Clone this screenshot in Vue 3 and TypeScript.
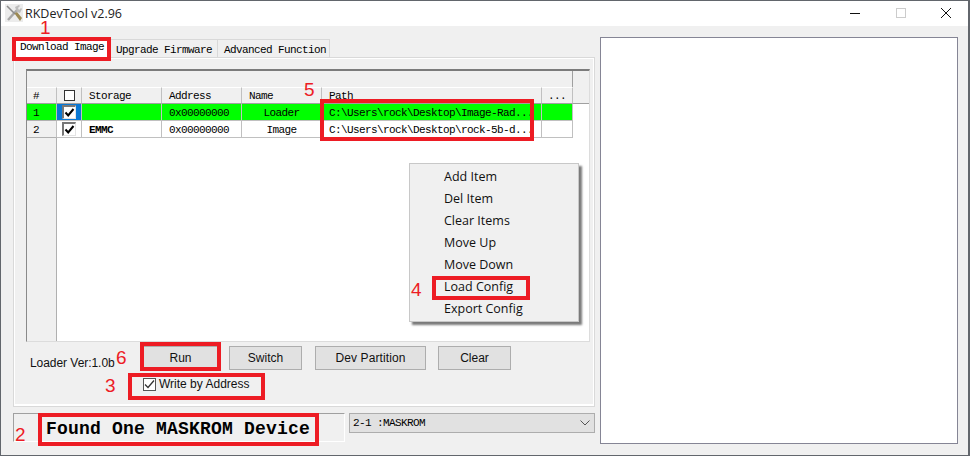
<script setup lang="ts">
const columns = [
  { label: '#', cls: 'c-num' },
  { label: '', cls: 'c-chk', box: true },
  { label: 'Storage', cls: 'c-sto' },
  { label: 'Address', cls: 'c-adr' },
  { label: 'Name', cls: 'c-nam' },
  { label: 'Path', cls: 'c-pat' },
  { label: '...', cls: 'c-dot' },
]
const rows = [
  { n: '1', storage: '', address: '0x00000000', name: 'Loader', path: 'C:\\Users\\rock\\Desktop\\Image-Rad...', sel: true },
  { n: '2', storage: 'EMMC', address: '0x00000000', name: 'Image', path: 'C:\\Users\\rock\\Desktop\\rock-5b-d...', sel: false },
]
const menu = ['Add Item', 'Del Item', 'Clear Items', 'Move Up', 'Move Down', 'Load Config', 'Export Config']
const marks = [
  { t: '1', x: 40, y: 21 },
  { t: '2', x: 15, y: 428 },
  { t: '3', x: 105, y: 379 },
  { t: '4', x: 411, y: 283 },
  { t: '5', x: 304, y: 83 },
  { t: '6', x: 116, y: 351 },
]
const boxes = [
  { x: 12, y: 37, w: 99, h: 24 },
  { x: 38, y: 413, w: 281, h: 33 },
  { x: 128, y: 373, w: 137, h: 27 },
  { x: 432, y: 276, w: 98, h: 24 },
  { x: 320, y: 99, w: 214, h: 42 },
  { x: 140, y: 342, w: 81, h: 29 },
]
</script>

<template>
  <div class="desk">
    <div class="win">
      <header class="title">
        <svg class="logo" width="20" height="20" viewBox="0 0 20 20">
          <rect x="1" y="1" width="18" height="18" fill="#ececec" />
          <path d="M4 17 L13 7" stroke="#a8a8a8" stroke-width="2.4" />
          <path d="M11 4 L15 2 L16 3 L14 5 L15 7 L17 5 L18 6 L16 10 L13 9 Z" fill="#bdbdbd" />
          <path d="M3 3 L11 11" stroke="#8c8c8c" stroke-width="1.6" />
          <path d="M10.5 10.5 L13 9 L18 15 L16 18 Z" fill="#9c8a55" />
        </svg>
        <span class="title-text">RKDevTool v2.96</span>
        <div class="caps">
          <svg width="12" height="12" viewBox="0 0 12 12"><path d="M1 6.5H11" stroke="#111" stroke-width="1" /></svg>
          <svg width="12" height="12" viewBox="0 0 12 12"><rect x="1.5" y="1.5" width="9" height="9" fill="none" stroke="#ccc" /></svg>
          <svg width="12" height="12" viewBox="0 0 12 12"><path d="M1 1L11 11M11 1L1 11" stroke="#111" stroke-width="1" /></svg>
        </div>
      </header>

      <div class="client">
        <div class="left">
          <nav class="tabs">
            <span class="tab active">Download Image</span>
            <span class="tab t2">Upgrade Firmware</span>
            <span class="tab t3">Advanced Function</span>
          </nav>
          <section class="panel">
            <div class="grid">
              <div class="band"><i class="band-line"></i></div>
              <div class="row head">
                <div v-for="c in columns" :key="c.cls" class="cell" :class="c.cls">
                  <span v-if="c.box" class="hbox"></span>
                  <template v-else>{{ c.label }}</template>
                </div>
                <div class="head-rest"></div>
              </div>
              <div v-for="r in rows" :key="r.n" class="row body" :class="{ sel: r.sel }">
                <div class="cell c-num">{{ r.n }}</div>
                <div class="cell c-chk">
                  <span class="check">
                    <svg width="11" height="11" viewBox="0 0 11 11"><path d="M1.5 5.5L4.2 8.5L9.5 2" fill="none" stroke="#000" stroke-width="2" /></svg>
                  </span>
                </div>
                <div class="cell c-sto strong">{{ r.storage }}</div>
                <div class="cell c-adr">{{ r.address }}</div>
                <div class="cell c-nam center">{{ r.name }}</div>
                <div class="cell c-pat">{{ r.path }}</div>
                <div class="cell c-dot"></div>
              </div>
              <div class="num-rest"></div>
            </div>

            <div class="actions">
              <span class="ver">Loader Ver:1.0b</span>
              <button class="btn b-run">Run</button>
              <button class="btn b-switch">Switch</button>
              <button class="btn b-dev">Dev Partition</button>
              <button class="btn b-clear">Clear</button>
            </div>
            <label class="wba">
              <span class="wba-box">
                <svg width="11" height="11" viewBox="0 0 11 11"><path d="M1 5.5L4 8.5L10 1.5" fill="none" stroke="#333" stroke-width="1.3" /></svg>
              </span>
              Write by Address
            </label>
          </section>

          <footer class="foot">
            <div class="status">Found One MASKROM Device</div>
            <div class="combo">
              <span>2-1 :MASKROM</span>
              <svg width="10" height="6" viewBox="0 0 10 6"><path d="M0.5 0.5L5 5L9.5 0.5" fill="none" stroke="#555" stroke-width="1" /></svg>
            </div>
          </footer>
        </div>
        <div class="log"></div>
      </div>
    </div>

    <ul class="menu">
      <li v-for="m in menu" :key="m">{{ m }}</li>
    </ul>

    <div
      v-for="(b, i) in boxes"
      :key="i"
      class="red-box"
      :style="{ left: b.x + 'px', top: b.y + 'px', width: b.w + 'px', height: b.h + 'px' }"
    ></div>
    <span
      v-for="m in marks"
      :key="m.t"
      class="mark"
      :style="{ left: m.x + 'px', top: m.y + 'px' }"
    >{{ m.t }}</span>
  </div>
</template>

<style>
html, body { margin: 0; background: #3b4a58; overflow: hidden; }
</style>

<style scoped>
.desk {
  position: relative;
  width: 970px;
  height: 456px;
  padding: 1px 1px 0 1px;
  box-sizing: border-box;
  overflow: hidden;
  background: #62666c;
}
.win {
  width: 967px;
  height: 454px;
  background: #f0f0f0;
  display: flex;
  flex-direction: column;
  box-sizing: border-box;
}
.title {
  height: 25px;
  flex: none;
  background: #fff;
  display: flex;
  align-items: center;
  padding: 0 0 1px 3px;
  box-sizing: border-box;
}
.logo { flex: none; }
.title-text {
  margin-left: 1px;
  font: 12.5px "Open Sans", "Noto Sans", sans-serif;
  color: #222;
}
.caps {
  margin-left: auto;
  display: flex;
  gap: 33.5px;
  padding: 0 16px 1px 0;
}
.client {
  flex: 1;
  display: flex;
  padding: 11px 10px 11px 12px;
  gap: 5px;
  min-height: 0;
}
.left {
  width: 582px;
  flex: none;
  display: flex;
  flex-direction: column;
}
.tabs {
  display: flex;
  height: 20px;
  font: 11px "Liberation Mono", monospace;
  letter-spacing: -0.6px;
  color: #000;
  padding-left: 3px;
  flex: none;
  position: relative;
}
.tab {
  padding: 4px 5px 0 7px;
  background: #f0f0f0;
  border: 1px solid #d9d9d9;
  border-left: none;
  border-bottom: none;
  height: 18px;
  margin-top: 2px;
  box-sizing: border-box;
  white-space: nowrap;
}
.tab.t3 { padding: 4px 3px 0 6px; }
.tab.active {
  background: #fff;
  margin-top: 0;
  height: 21px;
  padding: 4px 5px 0 4px;
  border: none;
  position: relative;
}
.panel {
  width: 582px;
  height: 350px;
  border: 1px solid #d9d9d9;
  box-sizing: border-box;
  padding: 11px 0 0 12px;
  background: #f0f0f0;
  box-shadow: inset -1px -2px 0 #fff, inset 1px 1px 0 #fff;
}
.grid {
  width: 564px;
  height: 273px;
  background: #fff;
  border-top: 2px solid #7b7b7b;
  border-left: 1px solid #8a8a8a;
  border-right: 1px solid #dcdcdc;
  border-bottom: 1px solid #dcdcdc;
  box-sizing: border-box;
  position: relative;
  font: 11px "Liberation Mono", monospace;
  letter-spacing: -0.6px;
  color: #000;
}
.band {
  height: 16px;
  background: #f0f0f0;
}
.band-line {
  display: block;
  box-sizing: border-box;
  width: 546px;
  height: 100%;
  border-right: 1px solid #a0a0a0;
}
.row {
  display: flex;
  height: 17px;
}
.cell {
  box-sizing: border-box;
  padding-left: 7px;
  line-height: 17px;
  padding-top: 1px;
  border-right: 1px solid #c0c0c0;
  border-bottom: 1px solid #c0c0c0;
  white-space: pre;
  flex: none;
}
.head { background: #f0f0f0; }
.head .cell {
  line-height: 17px;
  padding-top: 0;
  border-top: 1px solid #fff;
  border-bottom: 1px solid #a0a0a0;
}
.head-rest {
  flex: 1;
  border-bottom: 1px solid #a0a0a0;
}
.grid .c-num { width: 30px; padding-left: 6px; }
.grid .c-chk { width: 25px; padding: 0; display: flex; align-items: center; justify-content: center; }
.c-sto { width: 80px; }
.c-adr { width: 80px; }
.c-nam { width: 80px; }
.c-pat { width: 220px; }
.grid .c-dot { width: 31px; text-align: center; padding-left: 0; }
.grid .center { text-align: center; padding-left: 0; }
.strong { font-weight: 700; }
.body .c-num { background: #f0f0f0; border-bottom-color: #b0b0b0; }
.sel .cell { background: #00ff00; }
.sel .c-chk { background: #0a78d4; }
.body.sel .c-num { background: #00ff00; }
.hbox {
  width: 9px;
  height: 9px;
  border: 1px solid #333;
  background: #fff;
}
.check {
  width: 14px;
  height: 14px;
  box-sizing: border-box;
  background: #fff;
  border: 1px solid #e4e4e4;
  border-top: 2px solid #777;
  border-left: 2px solid #777;
  display: flex;
  align-items: center;
  justify-content: center;
}
.num-rest {
  position: absolute;
  left: 0;
  top: 67px;
  width: 29px;
  bottom: 0;
  box-sizing: content-box;
  background: #f0f0f0;
  border-right: 1px solid #b0b0b0;
}
.actions {
  display: flex;
  align-items: flex-start;
  margin-top: 4px;
  height: 25px;
  font: 12px "Liberation Sans", sans-serif;
  color: #111;
}
.ver {
  width: 115px;
  margin-left: 4px;
  padding-top: 10px;
  letter-spacing: -0.05px;
  white-space: nowrap;
  flex: none;
}
.btn {
  height: 24px;
  box-sizing: border-box;
  background: #e1e1e1;
  border: 1px solid #adadad;
  font: 12px "Liberation Sans", sans-serif;
  color: #111;
  padding: 0;
  flex: none;
}
.b-run { width: 77px; margin-left: -3px; }
.b-switch { width: 73px; margin-left: 10px; }
.b-dev { width: 111px; margin-left: 13px; letter-spacing: 0.1px; }
.b-clear { width: 73px; margin-left: 12px; }
.wba {
  display: flex;
  align-items: center;
  margin: 5px 0 0 117px;
  height: 16px;
  font: 12px "Liberation Sans", sans-serif;
  color: #111;
  white-space: nowrap;
}
.wba-box {
  width: 13px;
  height: 13px;
  box-sizing: border-box;
  border: 1px solid #555;
  background: #fff;
  margin-right: 3px;
  display: flex;
  align-items: center;
  justify-content: center;
}
.foot {
  display: flex;
  margin-top: 6px;
  gap: 4px;
  flex: none;
}
.status {
  width: 332px;
  height: 29px;
  box-sizing: border-box;
  border-top: 1px solid #a0a0a0;
  border-left: 1px solid #a0a0a0;
  border-right: 1px solid #fff;
  border-bottom: 1px solid #fff;
  font: 700 18px "Liberation Mono", monospace;
  letter-spacing: 0.2px;
  color: #000;
  padding: 5px 0 0 32px;
  white-space: pre;
}
.combo {
  width: 246px;
  height: 20px;
  box-sizing: border-box;
  background: #e1e1e1;
  border: 1px solid #adadad;
  font: 11px "Liberation Mono", monospace;
  letter-spacing: -0.6px;
  color: #000;
  display: flex;
  align-items: center;
  justify-content: space-between;
  padding: 0 4px 0 3px;
}
.log {
  width: 358px;
  height: 407px;
  background: #fff;
  border: 1px solid #858595;
  box-sizing: border-box;
  flex: none;
}
.menu {
  position: absolute;
  left: 409px;
  top: 163px;
  width: 170px;
  height: 159px;
  margin: 0;
  padding: 2px 0 0 34px;
  list-style: none;
  box-sizing: border-box;
  background: #f0f0f0;
  border: 1px solid #c8c8c8;
  box-shadow: 3px 3px 2px #7a7a7a;
  font: 12.5px "Open Sans", "Noto Sans", sans-serif;
  color: #111;
}
.menu li { height: 22px; line-height: 22px; white-space: nowrap; }
.red-box {
  position: absolute;
  border: 4px solid #ed1c24;
  box-sizing: border-box;
}
.mark {
  position: absolute;
  font: 19px "Liberation Sans", sans-serif;
  color: #ed1c24;
  line-height: 14px;
}
</style>
